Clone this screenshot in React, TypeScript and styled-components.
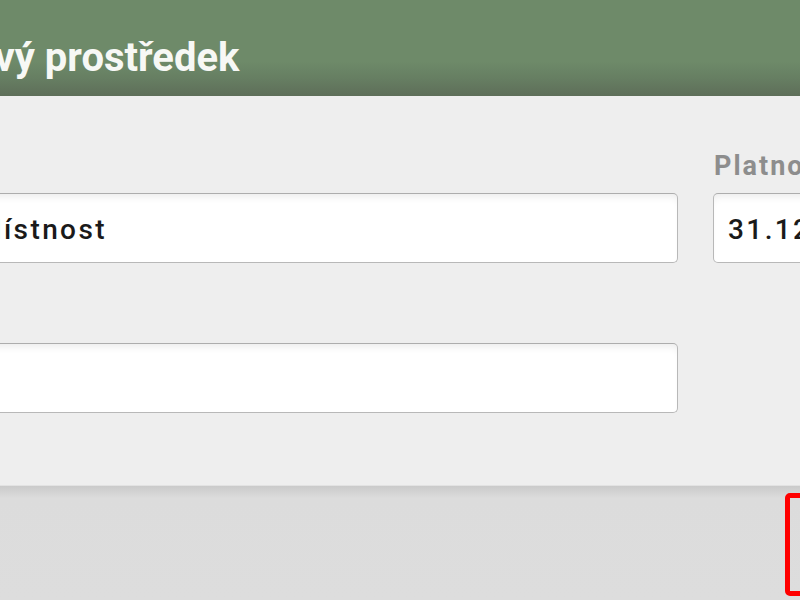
import React from "react";
import styled, { createGlobalStyle } from "styled-components";

const Global = createGlobalStyle`
  html, body {
    margin: 0;
    padding: 0;
    overflow: hidden;
    background: #dddddd;
  }
  * { box-sizing: border-box; }
`;

const Dialog = styled.div`
  width: 1100px;
  margin-left: -80px;
  display: flex;
  flex-direction: column;
  height: 600px;
  overflow: hidden;
  font-family: Roboto, "Liberation Sans", sans-serif;
`;

const Header = styled.header`
  height: 96px;
  display: flex;
  align-items: flex-end;
  padding: 0 0 14px 24px;
  background: linear-gradient(
    to bottom,
    #6e8a69 0%,
    #6e8a69 64%,
    #667e62 82%,
    #5e6e59 100%
  );
`;

const Title = styled.h1`
  margin: 0;
  font-size: 40px;
  line-height: 48px;
  font-weight: 700;
  color: #f7f8f5;
  white-space: nowrap;
`;

const Body = styled.section`
  background: #eeeeee;
  padding: 55px 0 72px 42px;
  display: grid;
  grid-template-columns: 716px 300px;
  column-gap: 35px;
  align-items: end;
`;

const Label = styled.label`
  display: block;
  font-size: 27px;
  line-height: 30px;
  font-weight: 700;
  color: #8d8d8d;
  letter-spacing: 2px;
  padding-left: 1px;
  margin-bottom: 12px;
  white-space: nowrap;
`;

const Field = styled.div<{ $gapTop?: number }>`
  display: flex;
  flex-direction: column;
  margin-top: ${(p) => p.$gapTop ?? 0}px;
`;

const Input = styled.input`
  width: 100%;
  height: 70px;
  border: 1px solid #b8b8b8;
  border-top-color: #adadad;
  border-radius: 5px;
  background: #ffffff;
  box-shadow: inset 0 7px 8px -5px rgba(0, 0, 0, 0.09);
  padding: 2px 14px 0;
  font-family: Roboto, "Liberation Sans", sans-serif;
  font-size: 28px;
  font-weight: 500;
  letter-spacing: 2.4px;
  color: #1a1a1a;
  outline: none;
`;

const Footer = styled.footer`
  flex: 1;
  background: linear-gradient(to bottom, #cacaca 0px, #dcdcdc 12px, #dddddd 100%);
  border-top: 1px solid #e2e2e2;
  padding: 7px 0 0 865px;
  display: flex;
  align-items: flex-start;
`;

const FocusButton = styled.button`
  width: 220px;
  height: 103px;
  border: 5px solid #ff0000;
  border-radius: 5px;
  background: transparent;
  padding: 0;
`;

export default function App() {
  return (
    <>
      <Global />
      <Dialog>
        <Header>
          <Title>Nový prostředek</Title>
        </Header>
        <Body>
          <Field>
            <Input readOnly defaultValue="Místnost" />
          </Field>
          <Field>
            <Label>Platnost</Label>
            <Input readOnly defaultValue="31.12.2025" />
          </Field>
          <Field $gapTop={80}>
            <Input readOnly defaultValue="" />
          </Field>
          <div />
        </Body>
        <Footer>
          <FocusButton aria-label="Uložit" />
        </Footer>
      </Dialog>
    </>
  );
}
